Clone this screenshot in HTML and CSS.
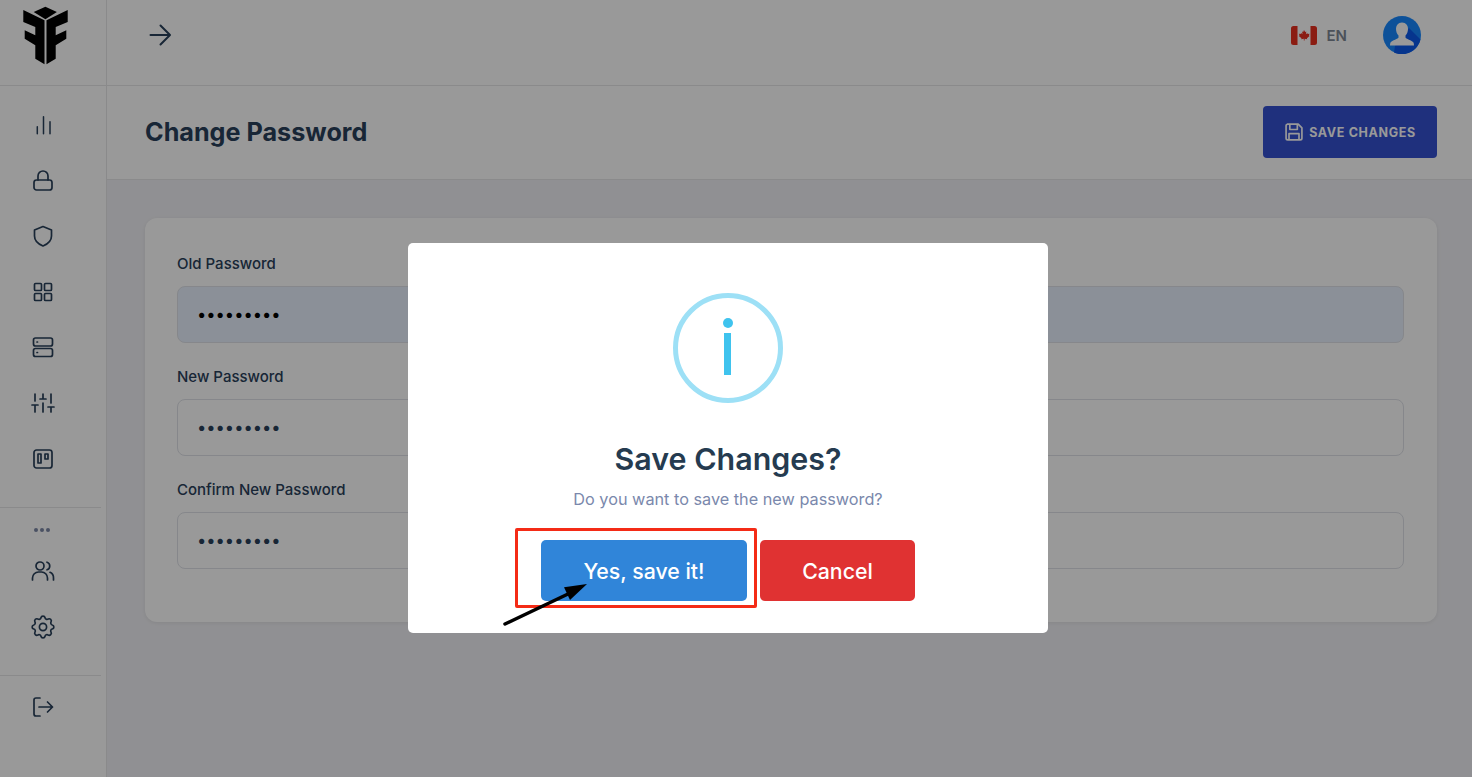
FILE: index.html
```html
<!DOCTYPE html>
<html lang="en">
<head>
<meta charset="utf-8">
<title>Change Password</title>
<link rel="stylesheet" href="styles.css">
</head>
<body>
<div class="app">
  <aside class="sidebar">
    <div class="logo">
      <svg width="48" height="60" viewBox="0 0 48 60"><polygon fill="#000" points="11.700,7 23.400,1.700 34.900,7 23.400,14.300"/><polygon fill="#000" points="1.300,5 22.500,15.300 22.500,59.300 13.300,53.700 13.300,40.300 2.700,33.700 2.700,25.300 13.300,30.300 13.300,22 1.300,17"/><polygon fill="#000" points="45.700,5 24.500,15.300 24.500,59.300 33.700,53.700 33.700,40.300 44.300,33.700 44.300,25.300 33.700,30.300 33.700,22 45.700,17"/></svg>
    </div>
    <nav class="nav">
      <svg class="ic ic-thin" viewBox="0 0 24 24"><path d="M6.300 20.700v-7M12.500 20.700v-17M19 20.700v-12"/></svg>
      <svg class="ic" viewBox="0 0 24 24"><rect x="3" y="11" width="18" height="10" rx="2.500"/><path d="M7 11V7a5 5 0 0 1 10 0v4"/></svg>
      <svg class="ic" viewBox="0 0 24 24"><path d="M12 2.500 20.500 6v6c0 5-3.600 8-8.500 10-4.900-2-8.500-5-8.500-10V6z"/></svg>
      <svg class="ic" viewBox="0 0 24 24"><rect x="3.500" y="3.500" width="7" height="7" rx="1"/><rect x="13.500" y="3.500" width="7" height="7" rx="1"/><rect x="3.500" y="13.500" width="7" height="7" rx="1"/><rect x="13.500" y="13.500" width="7" height="7" rx="1"/></svg>
      <svg class="ic" viewBox="0 0 24 24"><rect x="2.500" y="3" width="19" height="8" rx="2"/><rect x="2.500" y="13.500" width="19" height="8" rx="2"/><path d="M6 7h.5M6 17.500h.5"/></svg>
      <svg class="ic" viewBox="0 0 24 24"><path d="M4 21v-7M4 10V3M12 21v-9M12 8V3M20 21v-5M20 12V3M1 14h6M9 8h6M17 16h6"/></svg>
      <svg class="ic" viewBox="0 0 24 24"><rect x="3" y="3" width="18" height="18" rx="2.500"/><rect x="7" y="7" width="3" height="9"/><rect x="14" y="7" width="3" height="5"/></svg>
    </nav>
    <hr class="rule">
    <div class="more"><i></i><i></i><i></i></div>
    <nav class="nav nav-b">
      <svg class="ic" viewBox="0 0 24 24"><path d="M1.500 21v-2a6 6 0 0 1 6-6h3a6 6 0 0 1 6 6v2"/><circle cx="9" cy="7" r="4"/><path d="M16 3.200a4 4 0 0 1 0 7.600M19 13.300a6 6 0 0 1 3.500 5.700v2"/></svg>
      <svg class="ic ic-gear" viewBox="2 2 20 20"><circle cx="12" cy="12" r="3"/><path d="M10.300 4.300c.4-1.800 3-1.800 3.400 0a1.700 1.700 0 0 0 2.600 1.100c1.500-.9 3.300.8 2.400 2.400a1.700 1.700 0 0 0 1 2.500c1.800.4 1.800 3 0 3.400a1.700 1.700 0 0 0-1 2.600c.9 1.500-.9 3.300-2.400 2.400a1.700 1.700 0 0 0-2.600 1c-.4 1.800-3 1.800-3.400 0a1.700 1.700 0 0 0-2.600-1c-1.500.9-3.300-.9-2.400-2.400a1.700 1.700 0 0 0-1-2.600c-1.800-.4-1.800-3 0-3.400a1.700 1.700 0 0 0 1-2.500c-.9-1.600.9-3.300 2.400-2.400a1.700 1.700 0 0 0 2.600-1.100z"/></svg>
    </nav>
    <hr class="rule">
    <nav class="nav nav-c">
      <svg class="ic" viewBox="0 0 24 24"><path d="M9 3H5a2 2 0 0 0-2 2v14a2 2 0 0 0 2 2h4M8 12h13.500M16.500 7l5 5-5 5"/></svg>
    </nav>
  </aside>
  <div class="main">
    <header class="topbar">
      <svg class="ic back" viewBox="0 0 24 24"><path d="M1.500 12h19M11.500 2.500l9.500 9.500-9.500 9.500"/></svg>
      <div class="tools">
        <svg class="flag" width="26" height="19" viewBox="0 0 26 19"><rect width="26" height="19" rx="2.500" fill="#fff"/><path fill="#e8301f" d="M2.500 0H6.500v19H2.500A2.500 2.500 0 0 1 0 16.500v-14A2.500 2.500 0 0 1 2.500 0zM19.500 0h4A2.500 2.500 0 0 1 26 2.500v14a2.500 2.500 0 0 1-2.500 2.500h-4z"/><path fill="#e8301f" d="m13 4 1.200 2.100 1.100-.5-.4 2.700 1.400-1.200.4.9 1.800-.3-.6 1.800.7.400-2.700 2.300.3 1-2.600-.4V14.500h-.8v-1.700l-2.600.4.300-1-2.700-2.300.7-.4-.6-1.800 1.800.3.4-.9 1.400 1.200-.4-2.700 1.100.5z"/></svg>
        <span class="lang">EN</span>
        <svg class="avatar" width="38" height="38" viewBox="0 0 38 38"><circle cx="19" cy="19" r="19" fill="#1688ff"/><path fill="#0b59ec" d="M26 12 37.500 23.500a19 19 0 0 1-26.500 13L12 30z"/><path fill="#fff" d="M19 6.500c4 0 6 3 6 6.500 0 2.500-1 5-2.500 6.500v2c0 1.500 6.500 2.500 8 5 .5 1 .5 3 .5 3H7s0-2 .5-3c1.500-2.500 8-3.500 8-5v-2C14 18 13 15.500 13 13c0-3.500 2-6.500 6-6.500z"/></svg>
      </div>
    </header>
    <section class="page-head">
      <h1>Change Password</h1>
      <button class="save-btn" type="button">
        <svg width="20" height="20" viewBox="0 0 24 24" fill="none" stroke="currentColor" stroke-width="2" stroke-linejoin="round"><path d="M4 2.500h13l4.500 4.500v12.500a2 2 0 0 1-2 2h-15a2 2 0 0 1-2-2v-15a2 2 0 0 1 2-2z"/><path d="M7 2.500V9h9V2.500M6 21.500V14h12v7.500"/></svg>
        SAVE CHANGES
      </button>
    </section>
    <section class="content">
      <form class="card">
        <label class="field"><span>Old Password</span><input class="input input-filled" type="password" value="123456789"></label>
        <label class="field"><span>New Password</span><input class="input" type="password" value="123456789"></label>
        <label class="field"><span>Confirm New Password</span><input class="input" type="password" value="123456789"></label>
      </form>
    </section>
  </div>
</div>
<div class="overlay">
  <div class="modal">
    <div class="info"><b class="info-dot"></b><b class="info-bar"></b></div>
    <h2>Save Changes?</h2>
    <p>Do you want to save the new password?</p>
    <div class="actions">
      <button class="btn btn-yes" type="button">Yes, save it!</button>
      <button class="btn btn-no" type="button">Cancel</button>
    </div>
    <div class="callout"></div>
    <svg class="arrow" width="100" height="60" viewBox="0 0 100 60"><path d="M5 48 68 18" stroke="#000" stroke-width="3.500" stroke-linecap="round"/><polygon points="87,8 64,11.300 70,24" fill="#000"/></svg>
  </div>
</div>
</body>
</html>
```
FILE: styles.css
```css
* { box-sizing: border-box; }
html, body { margin: 0; height: 100%; overflow: hidden; }
body { font-family: Inter, "Noto Sans", sans-serif; color: #29405a; background: #f1f1f5; }
.app { display: flex; height: 777px; }
.ic { width: 24px; height: 24px; fill: none; stroke: #29405a; stroke-width: 1.7; stroke-linecap: round; stroke-linejoin: round; display: block; }
.ic-thin { stroke-width: 1.5; }
.ic-gear { stroke-width: 1.4; }

.sidebar { width: 107px; flex: none; background: #fff; border-right: 1px solid #e6e6e8; }
.logo { height: 86px; border-bottom: 1px solid #e6e6e8; padding: 5px 0 0 22px; }
.logo svg { display: block; }
.nav { display: flex; flex-direction: column; gap: 31.6px; padding: 27px 0 0 31px; }
.rule { margin: 36px 5px 0 0; border: 0; border-top: 1px solid #e6e6e8; height: 0; }
.more { display: flex; gap: 2px; padding: 20px 0 0 34px; height: 24px; }
.more i { width: 4px; height: 4px; border-radius: 50%; background: #7c87a6; }
.nav-b { padding-top: 27px; gap: 32px; }
.nav-c { padding-top: 19px; }

.main { flex: 1; min-width: 0; display: flex; flex-direction: column; }
.topbar { height: 86px; flex: none; background: #fff; border-bottom: 1px solid #e6e6e8; display: flex; justify-content: space-between; align-items: flex-start; padding: 23px 51px 0 42px; }
.back { stroke-width: 2; }
.tools { display: flex; align-items: center; height: 24px; }
.flag { display: block; }
.lang { font-size: 15px; font-weight: 600; color: #7e8794; margin: 0 36px 0 10px; }
.avatar { display: block; }
.page-head { height: 94px; flex: none; background: #fff; border-bottom: 1px solid #e6e6e8; display: flex; justify-content: space-between; align-items: center; padding: 0 35px 0 38px; }
h1 { margin: 0 0 2px; font-size: 25.2px; font-weight: 700; color: #29405a; }
.save-btn { width: 174px; height: 52px; margin-top: -1px; border: 0; border-radius: 4px; background: #3450d0; color: #fff; font: 700 12.500px Inter, sans-serif; letter-spacing: .65px; display: flex; align-items: center; justify-content: center; gap: 5px; padding: 0; }
.content { flex: 1; padding: 38px 35px 0 38px; background: #f1f1f5; }
.card { height: 404px; background: #fff; border-radius: 12px; box-shadow: 0 1px 4px rgba(0,0,0,.08); padding: 37px 33px 0 32px; display: flex; flex-direction: column; gap: 25px; }
.field { display: block; }
.field span { display: block; font-size: 15px; font-weight: 500; line-height: 17px; margin-bottom: 14px; color: #29405a; }
.input { display: block; width: 100%; height: 57px; border: 1px solid #dfe2e8; border-radius: 8px; background: #fff; padding: 0 19px 2px; font: 16.500px Inter, sans-serif; color: #29405a; outline: 0; }
.input-filled { background: #e8f0fe; color: #000; }

.overlay { position: fixed; inset: 0; background: rgba(0,0,0,.4); display: flex; align-items: flex-start; justify-content: center; padding: 243px 16px 0 0; }
.modal { position: relative; width: 640px; height: 390px; background: #fff; border-radius: 5px; display: flex; flex-direction: column; align-items: center; padding-top: 50px; text-align: center; }
.info { position: relative; width: 110px; height: 110px; border: 5px solid #9de0f6; border-radius: 50%; flex: none; }
.info-dot { position: absolute; left: 45px; top: 20px; width: 10px; height: 10px; border-radius: 50%; background: #3fc3ee; }
.info-bar { position: absolute; left: 46px; top: 35px; width: 7px; height: 42px; background: #3fc3ee; }
h2 { margin: 38px 0 0; font-size: 30.400px; line-height: 36px; font-weight: 600; color: #253b50; }
.modal p { margin: 12px 0 0; font-size: 16.250px; line-height: 20px; color: #7a88ac; }
.actions { display: flex; gap: 13px; margin-top: 31px; }
.btn { height: 61px; border: 0; border-radius: 5px; color: #fff; font: 500 21.300px Inter, sans-serif; padding: 0; }
.btn-yes { width: 206px; background: #3085d9; }
.btn-no { width: 155px; background: #e03232; }
.callout { position: absolute; left: 107px; top: 285px; width: 242px; height: 80px; border: 3px solid #f42b16; border-radius: 2px; }
.arrow { position: absolute; left: 92px; top: 333px; overflow: visible; }
```
